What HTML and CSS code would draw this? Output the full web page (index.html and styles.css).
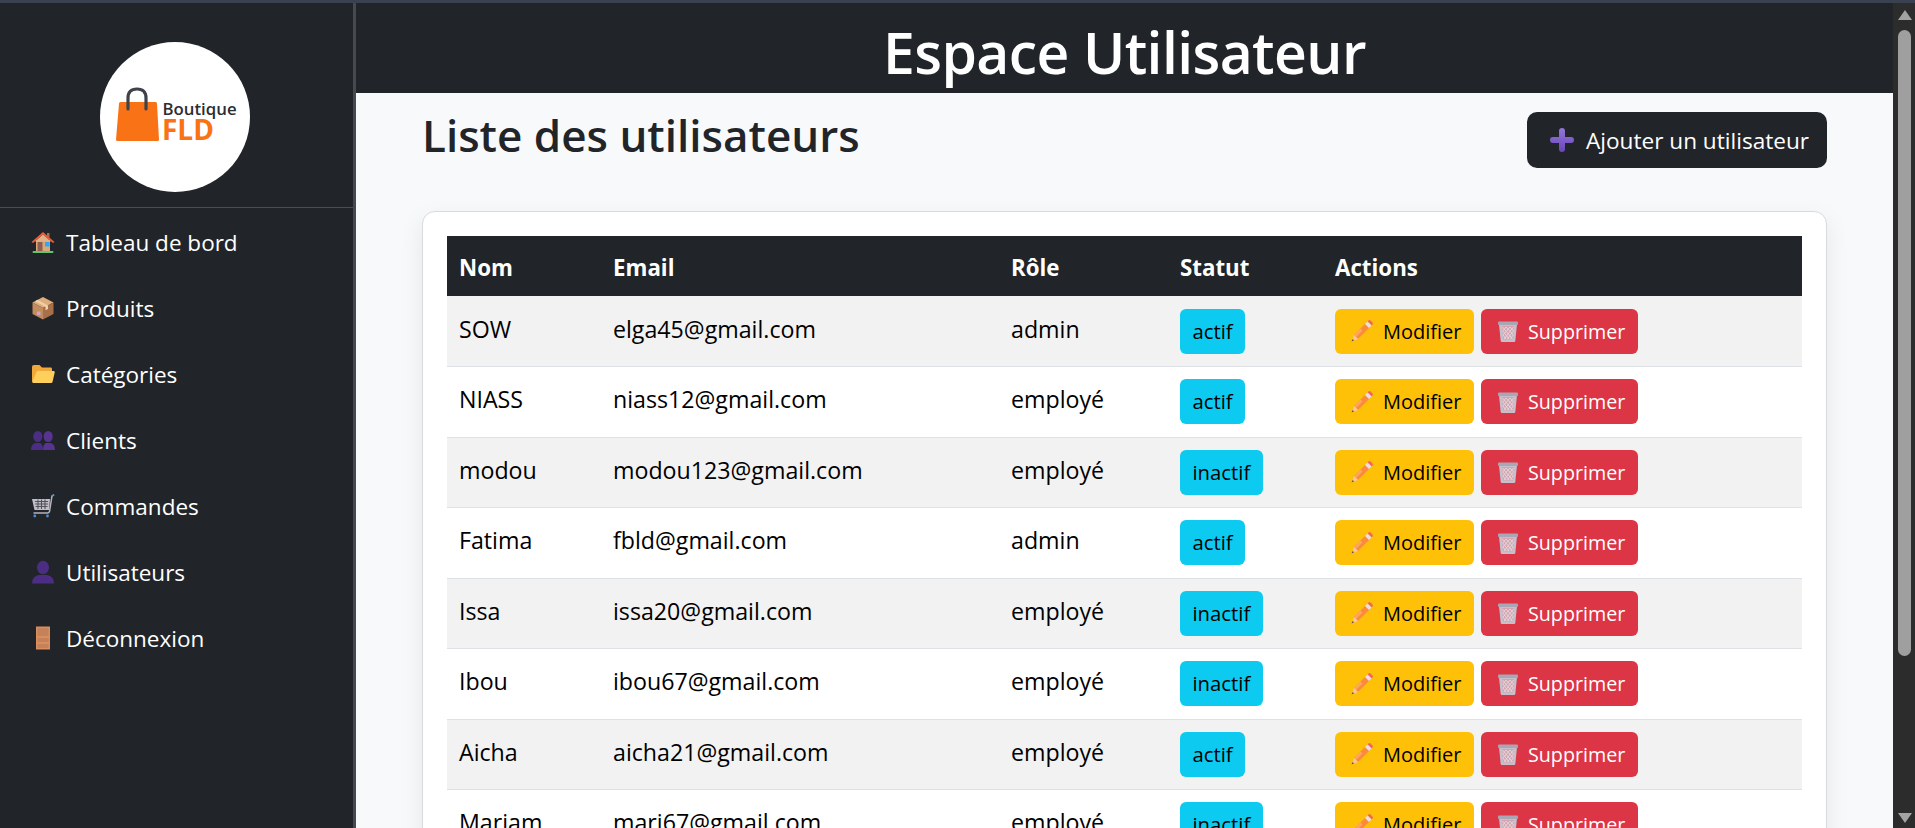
FILE: index.html
```html
<!DOCTYPE html>
<html lang="fr">
<head>
<meta charset="utf-8">
<title>Espace Utilisateur</title>
<link rel="stylesheet" href="styles.css">
</head>
<body>
<svg class="defs" width="0" height="0" aria-hidden="true">
  <defs>
    <linearGradient id="g-plus" x1="0" y1="0" x2="0" y2="1">
      <stop offset="0" stop-color="#9277d8"/>
      <stop offset="1" stop-color="#6a46ba"/>
    </linearGradient>
    <symbol id="i-pencil" viewBox="0 0 24 24">
      <path d="M16.5 3.5 L20.500 7.500 L8 20 L4 16 Z" fill="#fb8a3c"/>
      <path d="M10.500 9.500 L12.500 11.500 L6 18 L4 16 Z" fill="#fda65e"/>
      <path d="M17.500 2.500 L18.500 1.500 Q19.500 .7 20.500 1.500 L22.500 3.500 Q23.200 4.500 22.500 5.500 L21.500 6.500 Z" fill="#f4645c"/>
      <path d="M15 5 L17.500 2.500 L21.500 6.500 L19 9 Z" fill="#e6dfe6"/>
      <path d="M4 16 L8 20 L2.200 22 Z" fill="#f6c9a0"/>
      <path d="M2.800 20 L4 21.200 L1.600 22.400 Z" fill="#553c5c"/>
    </symbol>
    <symbol id="i-trash" viewBox="0 0 24 24">
      <path d="M3 5 H21 L19.300 22 Q19.200 23 18 23 H6 Q4.800 23 4.700 22 Z" fill="#c4c1cd"/>
      <path d="M6 7 H18 L17 20.500 H7 Z" fill="#d3a4b0"/>
      <path d="M6.500 8 L16.500 20 M10 8 L17.300 16 M14 8 L17.700 12 M6.800 12 L13 20 M7 16 L10 20 M17.500 8 L8 20 M14 8 L7 16 M10 8 L6.800 12 M17.400 12 L11.500 20 M17.100 16 L14.500 20" stroke="#e4dfe4" stroke-width=".8" fill="none"/>
      <rect x="2" y="2.500" width="20" height="3.500" rx="1" fill="#a9a6b6"/>
    </symbol>
  </defs>
</svg>

<div class="app">
  <aside class="sidebar">
    <div class="brand">
      <div class="logo">
        <svg class="logo-art" viewBox="0 0 150 150" aria-label="Boutique FLD">
          <path d="M19 61.500 Q19 60 20.500 60 H55.500 Q57 60 57 61.500 L59 97.500 Q59 99 57.500 99 H17.500 Q16 99 16 97.500 Z" fill="#f97316"/>
          <path d="M28 67 V56 Q28 47 37 47 Q46 47 46 56 V67" fill="none" stroke="#3f4349" stroke-width="3.200" stroke-linecap="round"/>
          <text class="logo-top" x="62.500" y="73">Boutique</text>
          <text class="logo-bottom" x="62" y="98">FLD</text>
        </svg>
      </div>
    </div>
    <nav class="nav">
      <a class="nav-item" href="#">
        <svg class="nav-icon" viewBox="0 0 24 24"><path d="M5 10 H19 V21 H5 Z" fill="#dca878"/><path d="M16 3 H18.500 V8 L16 6 Z" fill="#b06a4a"/><path d="M12 2 L23.500 12 L22 13 L12 4.500 L2 13 L.5 12 Z" fill="#ef5a3c"/><path d="M12 4.500 L20 11.500 H4 Z" fill="#e2b184"/><rect x="6.500" y="12" width="5" height="9" fill="#8d5f52"/><rect x="14" y="12" width="4.500" height="4.500" fill="#2fa7f2"/><rect x="1.500" y="21" width="21" height="2" rx="1" fill="#62c46f"/></svg>
        <span>Tableau de bord</span>
      </a>
      <a class="nav-item" href="#">
        <svg class="nav-icon" viewBox="0 0 24 24"><path d="M12 1 L22.500 6.500 L12 12 L1.500 6.500 Z" fill="#e0ad7c"/><path d="M1.500 6.500 L12 12 V23.500 L1.500 18 Z" fill="#c48c5e"/><path d="M22.500 6.500 L12 12 V23.500 L22.500 18 Z" fill="#a87048"/><path d="M6.500 3.800 L17 9.400 V13 L14.500 14.300 V10.700 L4 5.200 Z" fill="#f0cfa8"/><rect x="6" y="15.500" width="3.500" height="3.500" fill="#c8a8c8"/></svg>
        <span>Produits</span>
      </a>
      <a class="nav-item" href="#">
        <svg class="nav-icon" viewBox="0 0 24 24"><path d="M1 5 Q1 3 3 3 H8.500 L11 5.500 H20 Q21 5.500 21 7 V20 H2 Q1 20 1 19 Z" fill="#f2a93b"/><path d="M5.500 10 Q5.800 9 7 9 H23 Q24 9 23.700 10.500 L21.500 20 Q21.300 21 20 21 H2.500 Q1 21 1.400 19.500 Z" fill="#ffcf5c"/></svg>
        <span>Catégories</span>
      </a>
      <a class="nav-item" href="#">
        <svg class="nav-icon" viewBox="0 0 24 24"><ellipse cx="6.800" cy="8.500" rx="4.500" ry="5.500" fill="#4b2e83"/><ellipse cx="17.200" cy="8.500" rx="4.500" ry="5.500" fill="#563490"/><path d="M0 22 Q0 16 4.500 15 H9 Q12 15.800 12 22 Z" fill="#4b2e83"/><path d="M12 22 Q12 15.800 15 15 H19.500 Q24 16 24 22 Z" fill="#563490"/></svg>
        <span>Clients</span>
      </a>
      <a class="nav-item" href="#">
        <svg class="nav-icon" viewBox="0 0 24 24"><path d="M1 5 H19 L18 16 H3.500 Z" fill="#c0bfc6"/><path d="M4 7.500 H17 M4.200 10 H17 M4.500 12.500 H16.500 M7 5.500 V15 M10.500 5.500 V15 M14 5.500 V15" stroke="#55525c" stroke-width="1.100"/><path d="M23 .8 L21 2 L18.500 17.500 Q18 19 16.500 19 H2.500" fill="none" stroke="#b4b3bc" stroke-width="1.500"/><circle cx="3.800" cy="22" r="1.400" fill="#4a90d9"/><circle cx="16.500" cy="22" r="1.400" fill="#4a90d9"/><path d="M20.800 1.800 L23.200 .6" stroke="#4a90d9" stroke-width="1.400"/></svg>
        <span>Commandes</span>
      </a>
      <a class="nav-item" href="#">
        <svg class="nav-icon" viewBox="0 0 24 24"><ellipse cx="12" cy="7.500" rx="6" ry="6.800" fill="#4b2e83"/><path d="M1 23.500 Q1 16 8 15 H16 Q23 16 23 23.500 Z" fill="#4b2e83"/></svg>
        <span>Utilisateurs</span>
      </a>
      <a class="nav-item" href="#">
        <svg class="nav-icon" viewBox="0 0 24 24"><rect x="5" y=".5" width="14" height="23" fill="#d98e5c"/><rect x="6.500" y="2" width="11" height="8" fill="#c4815a"/><rect x="6.500" y="12" width="11" height="4" fill="#c4815a"/><rect x="6.500" y="18" width="11" height="4" fill="#c4815a"/></svg>
        <span>Déconnexion</span>
      </a>
    </nav>
  </aside>

  <main class="main">
    <header class="topbar"><h1>Espace Utilisateur</h1></header>
    <section class="content">
      <div class="content-head">
        <h2>Liste des utilisateurs</h2>
        <a class="btn btn-add" href="#">
          <svg class="plus" viewBox="0 0 24 24"><path d="M12 0 Q15 0 15 3 V9 H21 Q24 9 24 12 Q24 15 21 15 H15 V21 Q15 24 12 24 Q9 24 9 21 V15 H3 Q0 15 0 12 Q0 9 3 9 H9 V3 Q9 0 12 0 Z" fill="url(#g-plus)"/></svg>
          <span>Ajouter un utilisateur</span>
        </a>
      </div>
      <div class="card">
        <table class="users">
          <thead>
            <tr><th class="c-name">Nom</th><th class="c-mail">Email</th><th class="c-role">Rôle</th><th class="c-stat">Statut</th><th>Actions</th></tr>
          </thead>
          <tbody>
            <tr><td class="cell-name">SOW</td><td>elga45@gmail.com</td><td>admin</td><td class="cell-ctl"><span class="badge">actif</span></td><td class="cell-ctl"><div class="actions"><a class="btn btn-edit" href="#"><svg class="ic"><use href="#i-pencil"/></svg>Modifier</a><a class="btn btn-del" href="#"><svg class="ic"><use href="#i-trash"/></svg>Supprimer</a></div></td></tr>
            <tr><td class="cell-name">NIASS</td><td>niass12@gmail.com</td><td>employé</td><td class="cell-ctl"><span class="badge">actif</span></td><td class="cell-ctl"><div class="actions"><a class="btn btn-edit" href="#"><svg class="ic"><use href="#i-pencil"/></svg>Modifier</a><a class="btn btn-del" href="#"><svg class="ic"><use href="#i-trash"/></svg>Supprimer</a></div></td></tr>
            <tr><td class="cell-name">modou</td><td>modou123@gmail.com</td><td>employé</td><td class="cell-ctl"><span class="badge">inactif</span></td><td class="cell-ctl"><div class="actions"><a class="btn btn-edit" href="#"><svg class="ic"><use href="#i-pencil"/></svg>Modifier</a><a class="btn btn-del" href="#"><svg class="ic"><use href="#i-trash"/></svg>Supprimer</a></div></td></tr>
            <tr><td class="cell-name">Fatima</td><td>fbld@gmail.com</td><td>admin</td><td class="cell-ctl"><span class="badge">actif</span></td><td class="cell-ctl"><div class="actions"><a class="btn btn-edit" href="#"><svg class="ic"><use href="#i-pencil"/></svg>Modifier</a><a class="btn btn-del" href="#"><svg class="ic"><use href="#i-trash"/></svg>Supprimer</a></div></td></tr>
            <tr><td class="cell-name">Issa</td><td>issa20@gmail.com</td><td>employé</td><td class="cell-ctl"><span class="badge">inactif</span></td><td class="cell-ctl"><div class="actions"><a class="btn btn-edit" href="#"><svg class="ic"><use href="#i-pencil"/></svg>Modifier</a><a class="btn btn-del" href="#"><svg class="ic"><use href="#i-trash"/></svg>Supprimer</a></div></td></tr>
            <tr><td class="cell-name">Ibou</td><td>ibou67@gmail.com</td><td>employé</td><td class="cell-ctl"><span class="badge">inactif</span></td><td class="cell-ctl"><div class="actions"><a class="btn btn-edit" href="#"><svg class="ic"><use href="#i-pencil"/></svg>Modifier</a><a class="btn btn-del" href="#"><svg class="ic"><use href="#i-trash"/></svg>Supprimer</a></div></td></tr>
            <tr><td class="cell-name">Aicha</td><td>aicha21@gmail.com</td><td>employé</td><td class="cell-ctl"><span class="badge">actif</span></td><td class="cell-ctl"><div class="actions"><a class="btn btn-edit" href="#"><svg class="ic"><use href="#i-pencil"/></svg>Modifier</a><a class="btn btn-del" href="#"><svg class="ic"><use href="#i-trash"/></svg>Supprimer</a></div></td></tr>
            <tr><td class="cell-name">Mariam</td><td>mari67@gmail.com</td><td>employé</td><td class="cell-ctl"><span class="badge">inactif</span></td><td class="cell-ctl"><div class="actions"><a class="btn btn-edit" href="#"><svg class="ic"><use href="#i-pencil"/></svg>Modifier</a><a class="btn btn-del" href="#"><svg class="ic"><use href="#i-trash"/></svg>Supprimer</a></div></td></tr>
          </tbody>
        </table>
      </div>
    </section>
  </main>

  <div class="scrollbar" aria-hidden="true">
    <span class="arrow arrow-up"></span>
    <span class="thumb"></span>
    <span class="track"></span>
    <span class="arrow arrow-down"></span>
  </div>
</div>
</body>
</html>
```
FILE: styles.css
```css
* { box-sizing: border-box; }
html, body { margin: 0; height: 100%; overflow: hidden; }
body {
  font-family: "Open Sans", "Noto Sans", sans-serif;
  font-size: 19px;
  color: #212529;
  background: #f8f9fa;
}
.defs { position: absolute; }
a { text-decoration: none; color: inherit; }

.app {
  display: flex;
  height: 828px;
  border-top: 3px solid #3a4252;
}

/* Sidebar */
.sidebar {
  flex: 0 0 356px;
  background: #212529;
  border-right: 3px solid #464a50;
  color: #fff;
}
.brand {
  display: flex;
  justify-content: center;
  padding: 39px 3px 14px 0;
  border-bottom: 1px solid #4a4e54;
  height: 205px;
}
.logo {
  width: 150px;
  height: 150px;
  border-radius: 50%;
  background: #fff;
  overflow: hidden;
}
.logo-art { display: block; width: 150px; height: 150px; }
.logo-top { font: 600 16.800px "Open Sans", sans-serif; fill: #2b2d31; }
.logo-bottom { font: 700 28px "Open Sans", sans-serif; fill: #f97316; }
.nav { display: flex; flex-direction: column; padding-top: 1px; }
.nav-item {
  display: flex;
  align-items: center;
  gap: 11px;
  height: 66px;
  padding-left: 31px;
  color: #fff;
  font-size: 22.500px;
}
.nav-icon { width: 24px; height: 24px; flex: none; }

/* Main */
.main {
  flex: 1;
  min-width: 0;
  display: flex;
  flex-direction: column;
  overflow: hidden;
}
.topbar {
  height: 90px;
  flex: none;
  background: #212529;
  color: #fff;
  display: flex;
  align-items: center;
  justify-content: center;
  padding-top: 8px;
}
.topbar h1 { margin: 0; font-size: 57px; font-weight: 600; line-height: 1; letter-spacing: -.6px; }
.content { padding: 19px 66px 0; }
.content-head {
  display: flex;
  justify-content: space-between;
  align-items: flex-start;
  margin-bottom: 43px;
}
.content-head h2 {
  margin: -2px 0 0;
  font-size: 44px;
  font-weight: 600;
  line-height: 50px;
}
.btn {
  display: inline-flex;
  align-items: center;
  border-radius: 6px;
  white-space: nowrap;
}
.btn-add {
  height: 56px;
  width: 300px;
  padding-left: 23px;
  gap: 12px;
  background: #212529;
  color: #fff;
  border-radius: 10px;
  font-size: 22.600px;
}
.plus { width: 24px; height: 24px; flex: none; }

.card {
  background: #fff;
  border: 1px solid #d8dadd;
  border-radius: 13px;
  padding: 24px;
  box-shadow: 0 8px 24px rgba(0, 0, 0, .08);
}
.users {
  width: 100%;
  border-collapse: collapse;
  table-layout: fixed;
}
.c-name { width: 153px; }
.c-mail { width: 398px; }
.c-role { width: 169px; }
.c-stat { width: 155px; }
.users th {
  background: #212529;
  color: #fff;
  text-align: left;
  font-weight: 700;
  height: 60px;
  padding: 2px 13px 0;
  font-size: 22.300px;
}
.users th.c-name { padding-left: 12px; }
.users td {
  height: 70.500px;
  padding: 0 13px 5px;
  border-bottom: 1px solid #dee2e6;
  color: #000;
  font-size: 23.200px;
  vertical-align: middle;
}
.users td.cell-name { padding-left: 12px; }
.users td.cell-ctl { padding-bottom: 0; }
.users tbody tr:nth-child(odd) td { background: #f2f2f2; }
.badge {
  display: inline-block;
  height: 45px;
  line-height: 45px;
  padding: 0 12.500px;
  background: #0dcaf0;
  border-radius: 6px;
  color: #000;
  font-size: 20.300px;
}
.actions { display: flex; gap: 7px; }
.actions .btn { height: 45px; font-size: 20px; padding-left: 15px; }
.btn-edit { background: #ffc107; color: #000; width: 139px; gap: 9px; }
.btn-del { background: #dc3545; color: #fff; width: 157px; gap: 8px; }
.actions .btn-del { font-size: 19.700px; }
.ic { width: 24px; height: 24px; flex: none; }

/* Window scrollbar */
.scrollbar {
  flex: 0 0 22px;
  background: #2c2c2c;
  display: flex;
  flex-direction: column;
  align-items: center;
  padding: 7px 0 5px 1px;
}
.arrow { width: 0; height: 0; border-left: 7.500px solid transparent; border-right: 7.500px solid transparent; flex: none; }
.arrow-up { border-bottom: 10px solid #a3a3a3; margin-bottom: 10px; }
.arrow-down { border-top: 10px solid #a3a3a3; }
.thumb { width: 13px; height: 626px; background: #9f9f9f; border-radius: 7px; flex: none; }
.track { flex: 1; }
```
